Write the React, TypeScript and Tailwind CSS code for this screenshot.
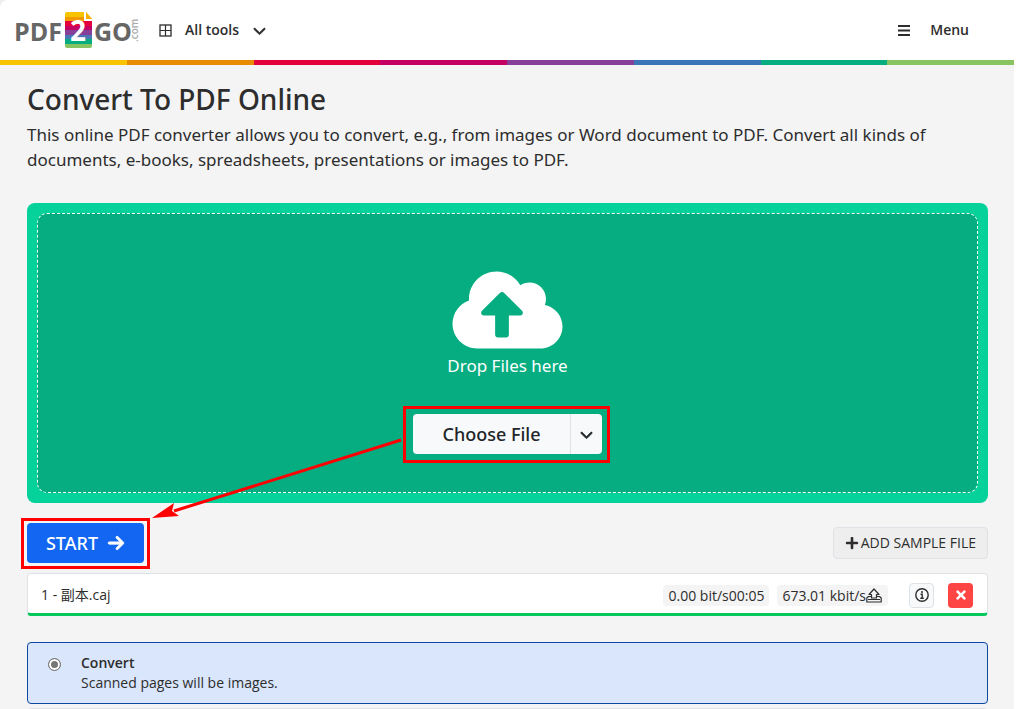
import { useState } from 'react';
import { FaCloudUploadAlt, FaPlus, FaTimes } from 'react-icons/fa';
import { FaArrowRight, FaChevronDown } from 'react-icons/fa6';

const stripes = [
  'bg-[#f8c300]',
  'bg-[#e98b00]',
  'bg-[#e4003a]',
  'bg-[#c40063]',
  'bg-[#87409a]',
  'bg-[#3b77b8]',
  'bg-[#05ad80]',
  'bg-[#89c463]',
];

function Logo() {
  return (
    <svg width="132" height="40" viewBox="-4 0 132 40" role="img" aria-label="PDF2GO.com">
      <g fontFamily="'Open Sans', sans-serif" fontWeight="700" fill="#666">
        <text x="-2" y="31" fontSize="25">PDF</text>
        <text x="78" y="31" fontSize="25">GO</text>
        <text transform="translate(122 32) rotate(-90)" fontSize="10" fontWeight="600" fill="#aaa">.com</text>
      </g>
      <clipPath id="page">
        <path d="M51 2h17v9h8v25a2 2 0 0 1-2 2H51a2 2 0 0 1-2-2V4a2 2 0 0 1 2-2zM70 2l6 7h-6z" />
      </clipPath>
      <g clipPath="url(#page)">
        <rect x="49" y="2" width="27" height="5" fill="#f8c300" />
        <rect x="49" y="7" width="27" height="4" fill="#f39a00" />
        <rect x="70" y="2" width="6" height="7" fill="#f8b000" />
        <rect x="49" y="11" width="27" height="5" fill="#e4003a" />
        <rect x="49" y="16" width="27" height="4" fill="#c40063" />
        <rect x="49" y="20" width="27" height="5" fill="#87409a" />
        <rect x="49" y="25" width="27" height="4" fill="#4b77b8" />
        <rect x="49" y="29" width="27" height="5" fill="#05ad80" />
        <rect x="49" y="34" width="27" height="4" fill="#89c463" />
      </g>
      <text x="62" y="31" textAnchor="middle" fontSize="28" fontWeight="700" fontFamily="'Open Sans', sans-serif" fill="#fff">2</text>
    </svg>
  );
}

function GridIcon() {
  return (
    <svg width="13" height="13" viewBox="0 0 13 13" fill="none" stroke="currentColor">
      <rect x="1" y="1" width="11" height="11" strokeWidth="1.3" />
      <path d="M6.5 1v11M1 6.5h11" strokeWidth="1.2" />
    </svg>
  );
}

function MenuIcon() {
  return (
    <svg width="12" height="11" viewBox="0 0 12 11" fill="currentColor">
      <path d="M0 0h12v2H0zM0 4.5h12v2H0zM0 9h12v2H0z" />
    </svg>
  );
}

function UploadIcon() {
  return (
    <svg width="16" height="15" viewBox="0 0 16 15" fill="none" stroke="currentColor" strokeWidth="1.2" strokeLinejoin="round">
      <path d="M8 1l5 5.500h-2.500v3.500h-5V6.500H3z" />
      <path d="M5.500 8.500H2.500L.8 10v4h14.400v-4l-1.700-1.500h-3" />
      <path d="M2 11.500h12" strokeWidth="1" />
    </svg>
  );
}

function InfoIcon() {
  return (
    <svg width="14" height="14" viewBox="0 0 14 14" fill="none" stroke="currentColor">
      <circle cx="7" cy="7" r="6.200" strokeWidth="1.400" />
      <circle cx="7" cy="4" r="1" fill="currentColor" stroke="none" />
      <path d="M5.500 6.300h1.700v3.800M5.300 10.200h3.500" strokeWidth="1.400" />
    </svg>
  );
}

function Header() {
  return (
    <header className="bg-[#eee]">
      <div className="flex h-[60px] items-center rounded-tl-lg bg-white pl-3 pr-[45px] text-sm font-semibold">
        <a href="#home">
          <Logo />
        </a>
        <button className="ml-[15px] flex items-center">
          <GridIcon />
          <span className="ml-[13px] mr-[14px]">All tools</span>
          <FaChevronDown size={13} strokeWidth={24} stroke="currentColor" />
        </button>
        <button className="ml-auto flex items-center gap-5">
          <MenuIcon />
          Menu
        </button>
      </div>
      <div className="grid h-[5px] grid-cols-8">
        {stripes.map((color) => (
          <div key={color} className={color} />
        ))}
      </div>
    </header>
  );
}

function DropZone() {
  return (
    <section className="mt-[31px] rounded-lg bg-[#05d19b] p-[10px]">
      <div className="flex flex-col items-center rounded-[10px] border border-dashed border-white bg-[#05ad80] pb-[38px] pt-[52px]">
        <FaCloudUploadAlt className="h-[88px] w-[111px] text-white" />
        <p className="font-['Noto_Sans'] text-[17px] leading-6 text-white">Drop Files here</p>
        <div className="relative mt-9 flex h-10 rounded bg-[#f8f9fa] text-[#212529]">
          <button className="w-[158px] border-r border-[#dee2e6] font-['Noto_Sans'] text-lg font-medium">Choose File</button>
          <button className="flex w-[31px] items-center justify-center" aria-label="More sources">
            <FaChevronDown size={13} strokeWidth={24} stroke="currentColor" />
          </button>
          <div className="pointer-events-none absolute -bottom-[9px] -left-[10px] -right-2 -top-2 border-3 border-[#f00]" />
          <svg className="pointer-events-none absolute right-full top-[22px] mr-[10px]" width="251" height="88" viewBox="0 0 251 88">
            <path d="M249 4L22 75" stroke="#f00" strokeWidth="3" />
            <path d="M0 82L22 67L20 75L27 80z" fill="#f00" />
          </svg>
        </div>
      </div>
    </section>
  );
}

function FileRow() {
  return (
    <div className="mt-[10px] flex h-[43px] items-center rounded border border-b-3 border-[#dee2e6] border-b-[#05c85a] bg-white pl-[13px] pr-[14px] pt-[3px] text-sm">
      <span>1 - 副本.caj</span>
      <span className="ml-auto rounded bg-[#f4f4f4] px-[5px] leading-[21px]">0.00 bit/s00:05</span>
      <span className="ml-2 flex items-center rounded bg-[#f4f4f4] pl-[5px] pr-[6px] leading-[21px]">
        673.01 kbit/s
        <UploadIcon />
      </span>
      <button className="ml-[21px] flex size-[25px] items-center justify-center rounded border border-[#dee2e6] bg-[#f8f9fa]" aria-label="File info">
        <InfoIcon />
      </button>
      <button className="ml-[14px] flex size-[25px] items-center justify-center rounded bg-[#ff4444] text-white" aria-label="Remove file">
        <FaTimes size={14} />
      </button>
    </div>
  );
}

export default function App() {
  const [mode, setMode] = useState('convert');

  return (
    <div className="h-screen overflow-hidden border-r-2 border-white bg-[#f4f4f4] font-['Open_Sans','Noto_Sans_CJK_SC',sans-serif] text-[#2d2d2d]">
      <Header />
      <main className="pl-[27px] pr-[26px] pt-4">
        <h1 className="font-['Noto_Sans'] text-[28px] font-medium leading-9">Convert To PDF Online</h1>
        <p className="mt-[5px] font-['Noto_Sans'] text-[17px] leading-[25px]">
          This online PDF converter allows you to convert, e.g., from images or Word document to PDF. Convert all kinds of
          documents, e-books, spreadsheets, presentations or images to PDF.
        </p>

        <DropZone />

        <div className="mt-5 flex items-center justify-between">
          <div className="relative">
            <button className="flex h-10 w-[117px] items-center justify-center gap-[9px] rounded bg-[#1266f1] font-['Noto_Sans'] text-lg font-medium text-white">
              START
              <FaArrowRight size={18} strokeWidth={24} stroke="currentColor" />
            </button>
            <div className="pointer-events-none absolute -inset-x-[6px] -bottom-[6px] -top-[5px] border-3 border-[#f00]" />
          </div>
          <button className="flex h-8 items-center gap-[2px] rounded border border-[#dee2e6] bg-[#eee] px-[11px] text-sm">
            <FaPlus size={14} />
            ADD SAMPLE FILE
          </button>
        </div>

        <FileRow />

        <label className="mt-[26px] flex h-[62px] items-start rounded border border-[#0d47a1] bg-[#d9e6fc] pl-5 pt-[10px] text-sm leading-5">
          <input
            type="radio"
            name="mode"
            value="convert"
            checked={mode === 'convert'}
            onChange={() => setMode('convert')}
            className="mt-[5px] size-[13px] appearance-none rounded-full border border-[#767676] bg-[#767676] shadow-[inset_0_0_0_2px_#fff]"
          />
          <span className="ml-5">
            <span className="block font-semibold">Convert</span>
            Scanned pages will be images.
          </span>
        </label>
        <div className="mt-1 h-[62px] rounded border border-[#dee2e6]" />
      </main>
    </div>
  );
}
